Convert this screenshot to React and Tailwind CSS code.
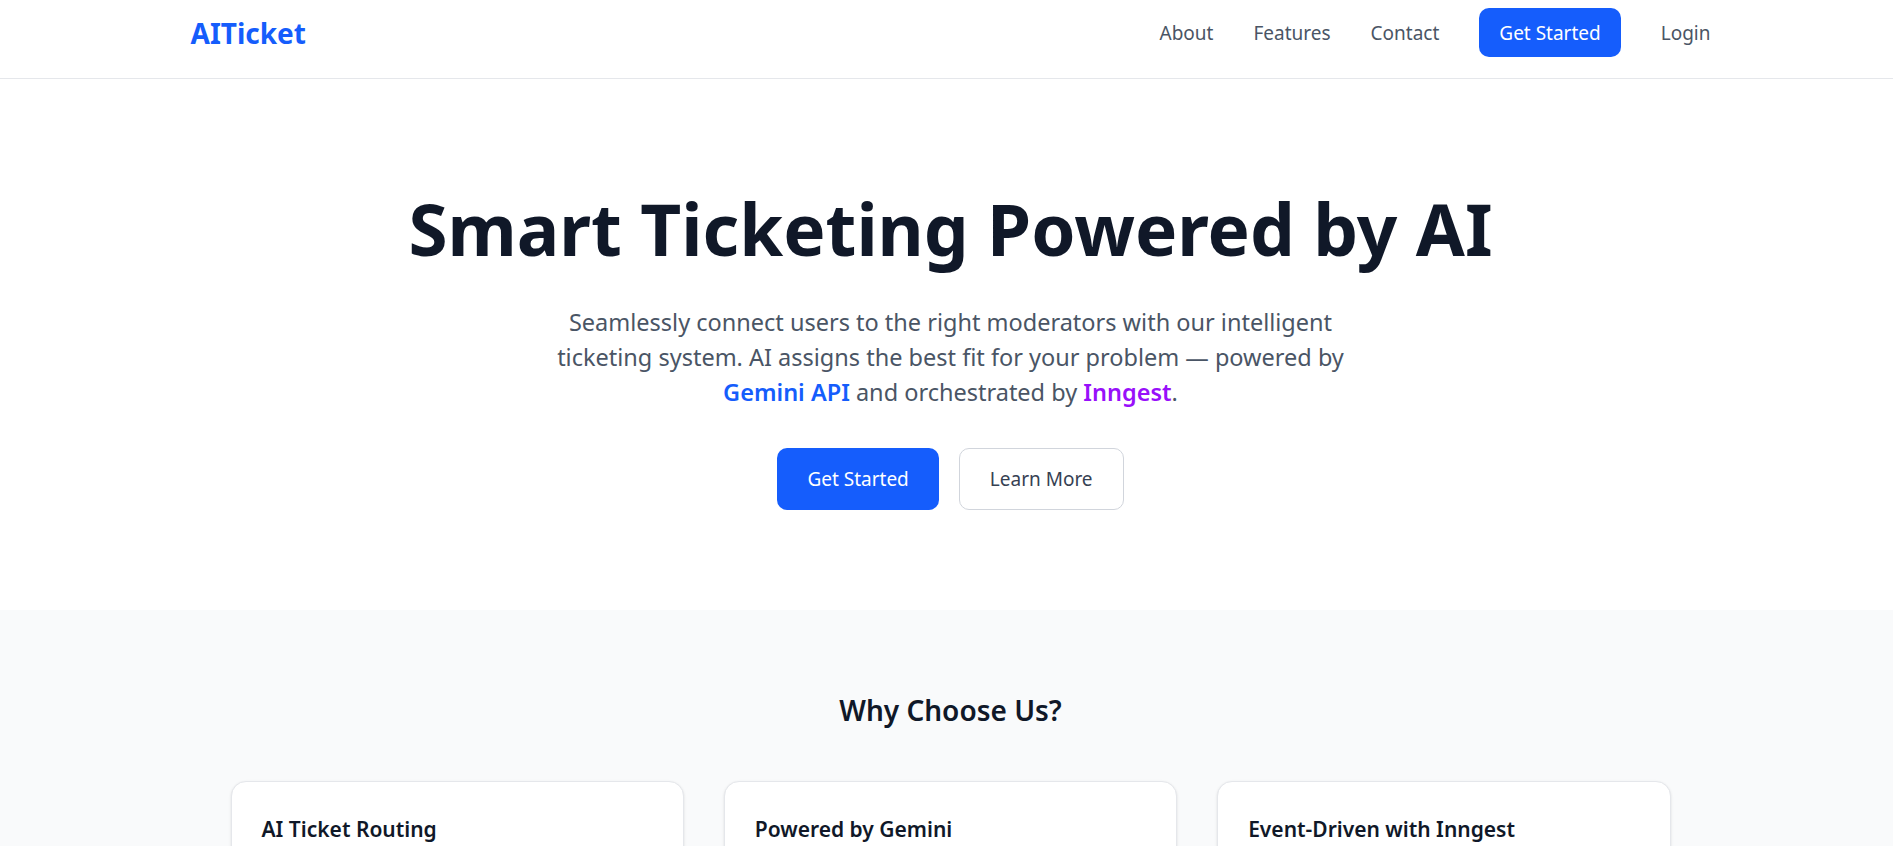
import React from 'react';

const features = [
  {
    title: 'AI Ticket Routing',
    body: 'Tickets are analyzed and routed to the moderator whose skills best match the problem.',
  },
  {
    title: 'Powered by Gemini',
    body: 'Gemini API reads each request, extracts the key details and suggests the right fit.',
  },
  {
    title: 'Event-Driven with Inngest',
    body: 'Background workflows run reliably on every event, from creation to resolution.',
  },
];

function Header() {
  return (
    <header className="h-[79px] border-b border-gray-200 bg-white pl-[8px]">
      <div className="mx-auto flex h-[57px] max-w-[1600px] items-center justify-between px-[40px] pt-[8px]">
        <a href="#" className="text-[28px] font-bold leading-[36px] text-blue-600">
          AITicket
        </a>
        <nav className="flex items-center gap-[40px] text-[19px] leading-[30px] text-gray-600">
          <a href="#">About</a>
          <a href="#">Features</a>
          <a href="#">Contact</a>
          <a href="#" className="flex h-[49px] items-center rounded-[10px] bg-blue-600 px-[20px] text-white">
            Get Started
          </a>
          <a href="#">Login</a>
        </nav>
      </div>
    </header>
  );
}

function Hero() {
  return (
    <section className="bg-white pt-[114px] pb-[100px] pl-[8px] text-center">
      <h1 className="text-[71px] font-bold leading-[72px] text-gray-900">
        Smart Ticketing Powered by AI
      </h1>
      <p className="mx-auto mt-[40px] max-w-[840px] text-[23.5px] leading-[35px] text-gray-600">
        Seamlessly connect users to the right moderators with our intelligent
        <br />
        ticketing system. AI assigns the best fit for your problem — powered by
        <br />
        <span className="font-semibold text-blue-600">Gemini API</span> and orchestrated by{' '}
        <span className="font-semibold text-purple-600">Inngest</span>.
      </p>
      <div className="mt-[38px] flex justify-center gap-[20px]">
        <a href="#" className="flex h-[62px] items-center rounded-[10px] bg-blue-600 px-[30px] text-[19px] text-white">
          Get Started
        </a>
        <a href="#" className="flex h-[62px] items-center rounded-[10px] border border-gray-300 bg-white px-[30px] text-[19px] text-gray-700">
          Learn More
        </a>
      </div>
    </section>
  );
}

function Features() {
  return (
    <section className="bg-gray-50 pt-[78px] pb-[100px] pl-[8px]">
      <h2 className="text-center text-[28px] font-semibold leading-[45px] text-gray-900">Why Choose Us?</h2>
      <div className="mx-auto mt-[48px] grid max-w-[1440px] grid-cols-3 gap-[40px]">
        {features.map(f => (
          <div key={f.title} className="rounded-[15px] border border-gray-200 bg-white p-[30px] shadow-sm">
            <h3 className="text-[21px] font-semibold leading-[35px] text-gray-900">{f.title}</h3>
            <p className="mt-[10px] text-[19px] leading-[30px] text-gray-600">{f.body}</p>
          </div>
        ))}
      </div>
    </section>
  );
}

export default function App() {
  return (
    <div className="min-h-screen bg-white font-['Noto_Sans',sans-serif]">
      <Header />
      <Hero />
      <Features />
    </div>
  );
}
